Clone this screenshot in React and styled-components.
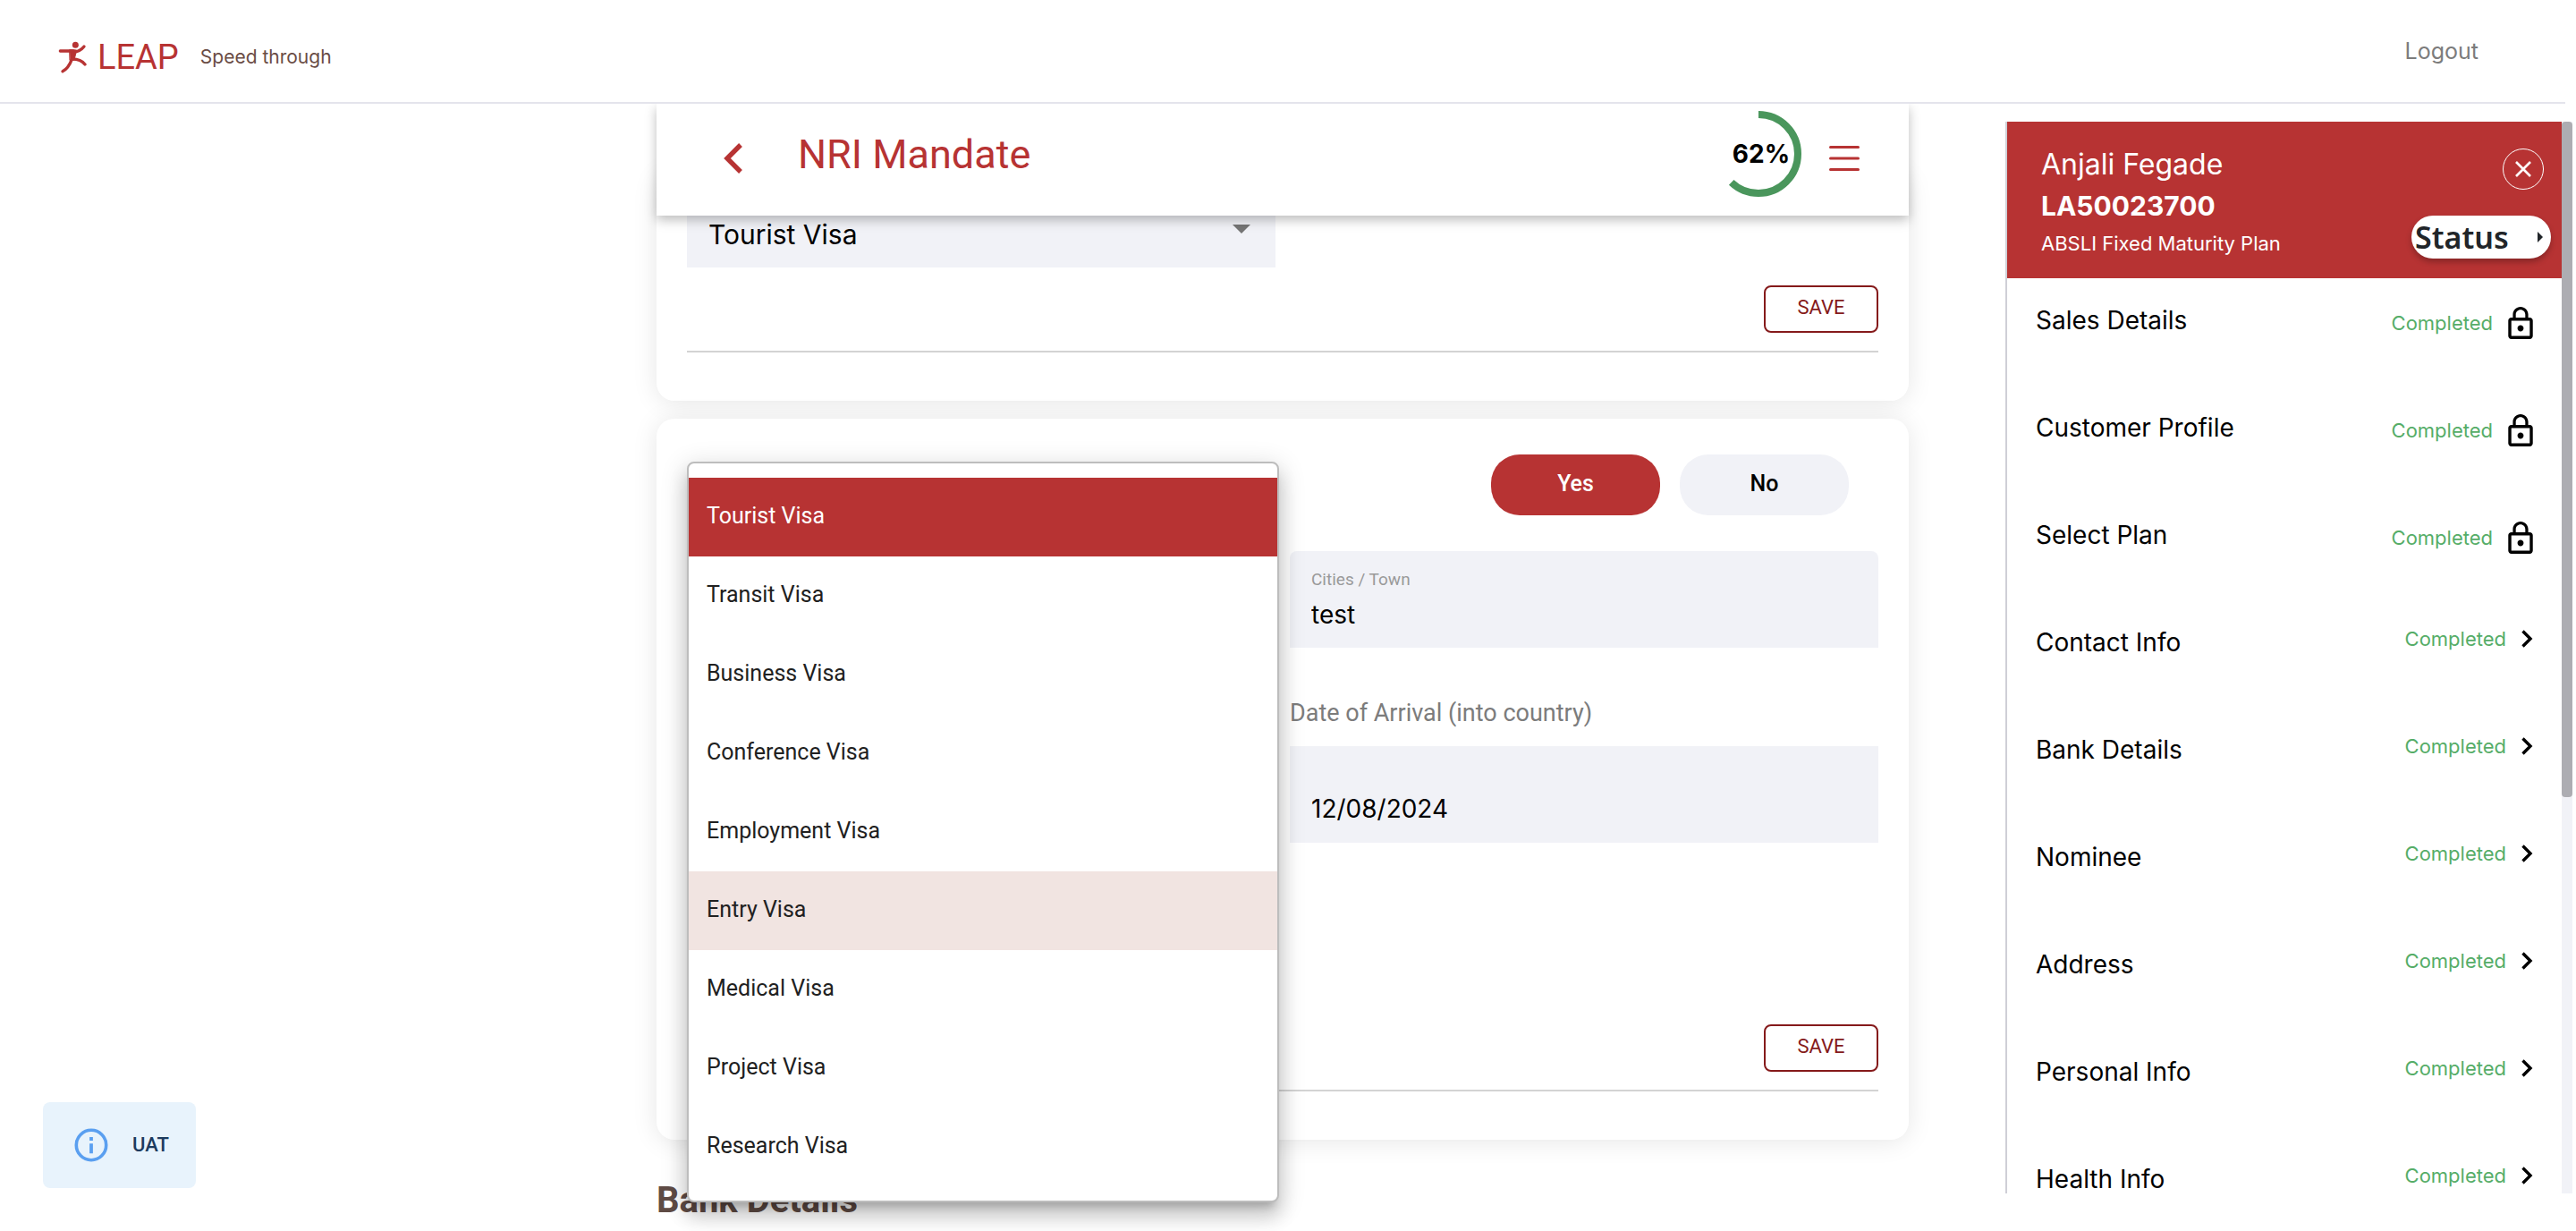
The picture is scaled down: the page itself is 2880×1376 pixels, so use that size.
import React, { useState } from "react";
import styled, { createGlobalStyle } from "styled-components";

const red = "#b73333";
const din = `Roboto, "Liberation Sans", sans-serif`;
const sans = `Inter, "Liberation Sans", sans-serif`;

const GlobalStyle = createGlobalStyle`
  *, *::before, *::after { box-sizing: border-box; }
  html, body { margin: 0; background: #fff; }
  body { font-family: ${sans}; color: #000; }
  button, input, select { font: inherit; color: inherit; margin: 0; }
  button { cursor: pointer; }
  ul { list-style: none; margin: 0; padding: 0; }
  h1, h2, p { margin: 0; }
  svg { display: block; flex: none; }
`;

const Page = styled.div`
  display: flex;
  flex-direction: column;
  height: 100vh;
  overflow: hidden;
`;

const TopBar = styled.header`
  display: flex;
  flex: none;
  align-items: center;
  justify-content: space-between;
  height: 116px;
  margin-right: 12px;
  padding: 0 97px 0 65px;
  border-bottom: 2px solid #e4e4ec;
`;

const Brand = styled.div`
  display: flex;
  align-items: center;
  padding-top: 14px;
`;

const BrandName = styled.span`
  margin-left: 12px;
  font: 400 38px/48px ${din};
  color: ${red};
`;

const Tagline = styled.span`
  margin-left: 24px;
  font-size: 21px;
  line-height: 28px;
  color: #6a4c45;
`;

const TextButton = styled.button`
  padding: 0;
  border: 0;
  background: none;
  font-size: 25px;
  line-height: 32px;
  color: #7c7c7c;
`;

const Body = styled.div`
  display: grid;
  flex: 1;
  grid-template-columns: minmax(0, 1fr) minmax(0, 1400px) auto;
  min-height: 0;
  overflow: hidden;
`;

const LeftColumn = styled.div`
  display: flex;
  align-items: flex-end;
  padding: 48px;
`;

const Notice = styled.div`
  display: flex;
  align-items: center;
  gap: 26px;
  height: 96px;
  padding: 0 30px 0 34px;
  border-radius: 8px;
  background: #e8f3fc;
  font: 500 22px/32px ${din};
  color: #1c3a5e;
`;

const Main = styled.main`
  min-width: 0;
  min-height: 0;
`;

const TitleBar = styled.div`
  position: sticky;
  top: 0;
  z-index: 2;
  display: flex;
  align-items: center;
  height: 125px;
  padding: 0 55px 12px 75px;
  background: #fff;
  box-shadow: 0 5px 12px rgba(0, 0, 0, 0.26);
`;

const IconButton = styled.button`
  padding: 8px 0 0;
  border: 0;
  background: none;
`;

const Title = styled.h1`
  flex: 1;
  margin-left: 61px;
  font: 400 45px/56px ${din};
  color: ${red};
`;

const Progress = styled.div`
  display: grid;
  place-items: center;
  margin: 0 31px 2px 0;
  font-size: 28px;
  font-weight: 700;
  > * { grid-area: 1 / 1; }
`;

const ProgressValue = styled.span`
  padding-left: 6px;
`;

const Card = styled.section`
  position: relative;
  display: flex;
  flex-direction: column;
  margin-top: ${(p) => (p.$scrolled ? "-50px" : "20px")};
  min-height: ${(p) => (p.$tall ? "806px" : "0")};
  padding: ${(p) => (p.$scrolled ? "0" : "40px")} 34px 54px;
  border-radius: 20px;
  background: #fff;
  box-shadow: 0 2px 28px rgba(0, 0, 0, 0.1);
`;

const FieldGrid = styled.div`
  display: grid;
  grid-template-columns: 1fr 1fr;
  gap: 0 16px;
`;

const Field = styled.label`
  display: flex;
  flex-direction: column;
  justify-content: flex-end;
  height: 108px;
  padding: 0 24px 17px;
  border-radius: ${(p) => (p.$square ? "0" : "8px 8px 0 0")};
  background: #f1f2f7;
`;

const FieldLabel = styled.span`
  font: 400 19px/24px ${din};
  color: #9a9a9a;
`;

const TextInput = styled.input`
  width: 100%;
  height: 40px;
  margin-top: 7px;
  padding: 0;
  border: 0;
  outline: 0;
  background: none;
  font-size: 28px;
`;

const SelectShell = styled(Field)`
  flex-direction: row;
  align-items: flex-end;
  justify-content: space-between;
  padding-right: 28px;
`;

const Select = styled.select`
  flex: 1;
  height: 40px;
  padding: 0;
  border: 0;
  outline: 0;
  appearance: none;
  background: none;
  font-size: 30px;
`;

const Caret = styled.svg`
  margin-bottom: 21px;
`;

const DateLabel = styled.label`
  grid-column: 2;
  margin: 48px 0 12px;
  font: 400 27px/50px ${din};
  color: #7c7c7c;
`;

const DateField = styled(Field)`
  grid-column: 2;
  padding-bottom: 18px;
`;

const Footer = styled.div`
  display: flex;
  justify-content: flex-end;
  margin-top: ${(p) => (p.$push ? "auto" : "20px")};
  padding-bottom: 20px;
  border-bottom: 2px solid #d3d3d3;
`;

const SaveButton = styled.button`
  width: 128px;
  height: 53px;
  padding: 0 0 4px;
  border: 2px solid #851a1b;
  border-radius: 8px;
  background: #fff;
  font: 400 22px/28px ${din};
  color: #851a1b;
`;

const Choices = styled.div`
  display: flex;
  justify-content: flex-end;
  gap: 22px;
  margin-bottom: 40px;
  padding-right: 33px;
`;

const Choice = styled.button`
  width: 189px;
  height: 68px;
  padding: 0 0 2px;
  border: 0;
  border-radius: 32px;
  background: ${(p) => (p.$active ? red : "#f1f2f7")};
  font: 500 25px/32px ${din};
  color: ${(p) => (p.$active ? "#fff" : "#000")};
`;

const MenuAnchor = styled.div`
  position: relative;
`;

const Menu = styled.ul`
  position: absolute;
  top: -100px;
  left: 0;
  z-index: 3;
  width: calc(100% + 4px);
  && { padding: 16px 0; }
  border: 2px solid #bdbdbd;
  border-radius: 8px;
  background: #fff;
  box-shadow: 0 10px 10px -6px rgba(0, 0, 0, 0.2), 0 16px 20px 2px rgba(0, 0, 0, 0.14),
    0 6px 28px 4px rgba(0, 0, 0, 0.12);
`;

const Option = styled.li`
  display: flex;
  align-items: center;
  height: 88px;
  padding: 0 20px 2px;
  background: ${(p) => (p.$selected ? red : p.$hover ? "#f1e4e1" : "#fff")};
  font: 400 25px/32px ${din};
  color: ${(p) => (p.$selected ? "#fff" : "#212121")};
`;

const SectionTitle = styled.h2`
  margin-top: 40px;
  font: 700 40px/56px ${din};
  color: #5f4b45;
`;

const Sidebar = styled.aside`
  display: flex;
  width: 634px;
  margin: 20px 4px 42px 108px;
  overflow: hidden;
`;

const SidePanel = styled.div`
  flex: 1;
  min-width: 0;
  border-left: 2px solid #cfcfd6;
`;

const Track = styled.div`
  flex: none;
  width: 12px;
  background: #f1f2f7;
`;

const Thumb = styled.div`
  height: 63%;
  border-radius: 4px;
  background: #adadb2;
`;

const Profile = styled.div`
  display: flex;
  justify-content: space-between;
  height: 175px;
  padding: 28px 12px 0 38px;
  background: ${red};
  color: #fff;
`;

const PersonName = styled.p`
  font-size: 32px;
  line-height: 40px;
`;

const PolicyNumber = styled.p`
  font-size: 30px;
  font-weight: 700;
  line-height: 52px;
`;

const PlanName = styled.p`
  font-size: 22px;
  line-height: 32px;
`;

const ProfileActions = styled.div`
  display: flex;
  flex-direction: column;
  align-items: flex-end;
  gap: 29px;
  padding-top: 2px;
`;

const CloseButton = styled.button`
  display: grid;
  place-items: center;
  width: 46px;
  height: 46px;
  margin-right: 8px;
  padding: 0;
  border: 1px solid #fff;
  border-radius: 50%;
  background: none;
`;

const StatusButton = styled.button`
  display: flex;
  align-items: center;
  justify-content: space-between;
  width: 156px;
  height: 48px;
  padding: 0 9px 0 4px;
  border: 0;
  border-radius: 24px;
  background: #fff;
  box-shadow: 0 4px 6px rgba(0, 0, 0, 0.25);
  font: 600 34px/48px "Noto Sans", sans-serif;
  color: #212529;
`;

const Step = styled.button`
  display: flex;
  align-items: flex-start;
  justify-content: space-between;
  width: 100%;
  height: 120px;
  padding: 31px 32px 0 32px;
  border: 0;
  background: none;
  font-size: 28px;
  line-height: 32px;
  text-align: left;
`;

const StepState = styled.span`
  display: flex;
  align-items: center;
  gap: 17px;
  height: ${(p) => (p.$locked ? "38px" : "24px")};
  font-size: 22px;
  line-height: 24px;
  color: #56ad68;
`;

const visas = [
  "Tourist Visa",
  "Transit Visa",
  "Business Visa",
  "Conference Visa",
  "Employment Visa",
  "Entry Visa",
  "Medical Visa",
  "Project Visa",
  "Research Visa",
];

const steps = [
  ["Sales Details", true],
  ["Customer Profile", true],
  ["Select Plan", true],
  ["Contact Info"],
  ["Bank Details"],
  ["Nominee"],
  ["Address"],
  ["Personal Info"],
  ["Health Info"],
];

const RunnerIcon = () => (
  <svg width="32" height="36" viewBox="196 142 96 108" fill="none" stroke={red} strokeLinecap="round" strokeLinejoin="round" aria-hidden="true">
    <circle cx="254" cy="155" r="10.5" fill={red} stroke="none" />
    <path d="M203 175H248" strokeWidth="10" />
    <path d="M250 179Q270 176 283 160" strokeWidth="10" />
    <path d="M235 171L258 172L250 205L236 206Z" fill={red} strokeWidth="3" />
    <path d="M242 203Q230 234 211 243" strokeWidth="10" />
    <path d="M244 202Q272 202 286 220" strokeWidth="10" />
  </svg>
);

const LockIcon = () => (
  <svg width="28" height="36" viewBox="4 1 16 21" fill="#000" aria-hidden="true">
    <path d="M12 17c1.1 0 2-.9 2-2s-.9-2-2-2-2 .9-2 2 .9 2 2 2zm6-9h-1V6c0-2.76-2.24-5-5-5S7 3.24 7 6v2H6c-1.1 0-2 .9-2 2v10c0 1.1.9 2 2 2h12c1.1 0 2-.9 2-2V10c0-1.1-.9-2-2-2zM8.9 6c0-1.71 1.39-3.1 3.1-3.1s3.1 1.39 3.1 3.1v2H8.9V6zM18 20H6V10h12v10z" />
  </svg>
);

const ChevronIcon = () => (
  <svg width="13" height="20" viewBox="0 0 13 20" fill="none" stroke="#000" strokeWidth="3.4" aria-hidden="true">
    <path d="M1.5 1.5L10 10L1.5 18.5" />
  </svg>
);

const ringLength = 2 * Math.PI * 44;

export default function App() {
  const [visa, setVisa] = useState("Tourist Visa");
  const [answer, setAnswer] = useState("Yes");
  return (
    <>
      <GlobalStyle />
      <Page>
        <TopBar>
          <Brand>
            <RunnerIcon />
            <BrandName>LEAP</BrandName>
            <Tagline>Speed through</Tagline>
          </Brand>
          <TextButton type="button">Logout</TextButton>
        </TopBar>
        <Body>
          <LeftColumn>
            <Notice role="status">
              <svg width="40" height="40" viewBox="0 0 40 40" fill="none" aria-hidden="true">
                <circle cx="20" cy="20" r="16.7" stroke="#5a9ff0" strokeWidth="3.6" />
                <path d="M20 18.3V29.3M20 11V15" stroke="#5a9ff0" strokeWidth="3.8" />
              </svg>
              UAT
            </Notice>
          </LeftColumn>

          <Main>
            <TitleBar>
              <IconButton type="button" aria-label="Back">
                <svg width="22" height="34" viewBox="0 0 22 34" fill="none" stroke={red} strokeWidth="5.4">
                  <path d="M19 2L4 17L19 32" />
                </svg>
              </IconButton>
              <Title>NRI Mandate</Title>
              <Progress>
                <svg width="96" height="96" viewBox="0 0 96 96" fill="none" aria-hidden="true">
                  <circle
                    cx="48"
                    cy="48"
                    r="44"
                    stroke="#4a965c"
                    strokeWidth="8"
                    strokeDasharray={`${ringLength * 0.62} ${ringLength}`}
                    transform="rotate(-90 48 48)"
                  />
                </svg>
                <ProgressValue>62%</ProgressValue>
              </Progress>
              <IconButton type="button" aria-label="Menu">
                <svg width="34" height="28" viewBox="0 0 34 28" fill="none" stroke={red} strokeWidth="3" strokeLinecap="round">
                  <path d="M1.5 1.5H32.5M1.5 14H32.5M1.5 26.5H32.5" />
                </svg>
              </IconButton>
            </TitleBar>

            <Card $scrolled>
              <FieldGrid>
                <SelectShell>
                  <Select aria-label="Type of Visa" value={visa} onChange={(e) => setVisa(e.target.value)}>
                    {visas.map((v) => (
                      <option key={v}>{v}</option>
                    ))}
                  </Select>
                  <Caret width="20" height="10" viewBox="0 0 20 10" fill="#757575" aria-hidden="true">
                    <path d="M0 0H20L10 10Z" />
                  </Caret>
                </SelectShell>
              </FieldGrid>
              <Footer>
                <SaveButton type="button">SAVE</SaveButton>
              </Footer>
            </Card>

            <Card $tall>
              <Choices>
                {["Yes", "No"].map((c) => (
                  <Choice key={c} type="button" $active={c === answer} onClick={() => setAnswer(c)}>
                    {c}
                  </Choice>
                ))}
              </Choices>
              <FieldGrid>
                <MenuAnchor>
                  <Menu role="listbox" aria-label="Type of Visa">
                    {visas.map((v) => (
                      <Option
                        key={v}
                        role="option"
                        aria-selected={v === visa}
                        $selected={v === visa}
                        $hover={v === "Entry Visa"}
                        onClick={() => setVisa(v)}
                      >
                        {v}
                      </Option>
                    ))}
                  </Menu>
                </MenuAnchor>
                <Field>
                  <FieldLabel>Cities / Town</FieldLabel>
                  <TextInput defaultValue="test" />
                </Field>
                <DateLabel htmlFor="arrival">Date of Arrival (into country)</DateLabel>
                <DateField as="div" $square>
                  <TextInput id="arrival" defaultValue="12/08/2024" />
                </DateField>
              </FieldGrid>
              <Footer $push>
                <SaveButton type="button">SAVE</SaveButton>
              </Footer>
            </Card>

            <SectionTitle>Bank Details</SectionTitle>
          </Main>

          <Sidebar>
            <SidePanel>
              <Profile>
                <div>
                  <PersonName>Anjali Fegade</PersonName>
                  <PolicyNumber>LA50023700</PolicyNumber>
                  <PlanName>ABSLI Fixed Maturity Plan</PlanName>
                </div>
                <ProfileActions>
                  <CloseButton type="button" aria-label="Close">
                    <svg width="18" height="18" viewBox="0 0 18 18" fill="none" stroke="#fff" strokeWidth="2.6">
                      <path d="M1 1L17 17M17 1L1 17" />
                    </svg>
                  </CloseButton>
                  <StatusButton type="button">
                    Status
                    <svg width="6" height="12" viewBox="0 0 6 12" fill="#212529" aria-hidden="true">
                      <path d="M0 0L6 6L0 12Z" />
                    </svg>
                  </StatusButton>
                </ProfileActions>
              </Profile>
              <nav aria-label="Application steps">
                {steps.map(([name, locked]) => (
                  <Step key={name} type="button">
                    {name}
                    <StepState $locked={locked}>
                      Completed
                      {locked ? <LockIcon /> : <ChevronIcon />}
                    </StepState>
                  </Step>
                ))}
              </nav>
            </SidePanel>
            <Track>
              <Thumb />
            </Track>
          </Sidebar>
        </Body>
      </Page>
    </>
  );
}
